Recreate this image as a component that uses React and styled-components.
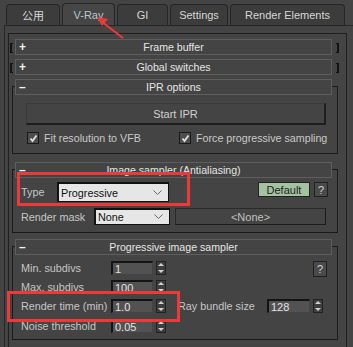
import React from "react";
import styled, { createGlobalStyle } from "styled-components";

const Global = createGlobalStyle`
  * { box-sizing: border-box; }
  body {
    margin: 0;
    background: #444444;
    font-family: "Liberation Sans", Arial, "Noto Sans CJK SC", sans-serif;
  }
`;

const tabs = ["公用", "V-Ray", "GI", "Settings", "Render Elements"];
const tabWidths = [54, 53, 51, 58, 115];

export default function App() {
  return (
    <Screen>
      <Global />
      <TabStrip>
        {tabs.map((t, i) => (
          <Tab key={t} $w={tabWidths[i]} $active={i === 1}>
            {t}
          </Tab>
        ))}
      </TabStrip>
      <TabPage>
        <Panel>
          <Collapsed>
            <Bracket />
            <Header>
              <Sign>+</Sign>Frame buffer
            </Header>
            <Bracket $right />
          </Collapsed>
          <Collapsed $top={4}>
            <Bracket />
            <Header>
              <Sign>+</Sign>Global switches
            </Header>
            <Bracket $right />
          </Collapsed>

          <Frame $top={11} $bottom={8}>
            <Header>
              <Sign>–</Sign>IPR options
            </Header>
            <BigButton>Start IPR</BigButton>
            <CheckRow>
              <Check>
                <Box>
                  <Tick />
                </Box>
                Fit resolution to VFB
              </Check>
              <Check>
                <Box>
                  <Tick />
                </Box>
                Force progressive sampling
              </Check>
            </CheckRow>
          </Frame>

          <Frame $top={15} $bottom={7}>
            <Header>
              <Sign>–</Sign>Image sampler (Antialiasing)
            </Header>
            <Row $h={20} $top={4}>
              <Label $w={36}>Type</Label>
              <Select $w={112} $h={20}>
                Progressive
                <Chevron />
              </Select>
              <DefaultBtn>Default</DefaultBtn>
              <Help>?</Help>
            </Row>
            <Row $h={17} $top={6}>
              <Label $w={73}>Render mask</Label>
              <Select $w={76} $h={17}>
                None
                <Chevron />
              </Select>
              <NoneBtn>&lt;None&gt;</NoneBtn>
            </Row>
          </Frame>

          <Frame $top={13} $bottom={6}>
            <Header>
              <Sign>–</Sign>Progressive image sampler
            </Header>
            <Row $h={14} $top={6}>
              <Label $w={90}>Min. subdivs</Label>
              <Spinner value="1" />
              <Help $tall>?</Help>
            </Row>
            <Row $h={14} $top={5}>
              <Label $w={90}>Max. subdivs</Label>
              <Spinner value="100" />
            </Row>
            <Row $h={14} $top={5}>
              <Label $w={90}>Render time (min)</Label>
              <Spinner value="1.0" />
              <Label $w={89} $left={12}>
                Ray bundle size
              </Label>
              <Spinner value="128" w={43} />
            </Row>
            <Row $h={14} $top={6}>
              <Label $w={90}>Noise threshold</Label>
              <Spinner value="0.05" />
            </Row>
          </Frame>
        </Panel>
      </TabPage>

      <Callout style={{ left: 17, top: 172, width: 173, height: 34 }} />
      <Callout style={{ left: 7, top: 291, width: 173, height: 31 }} />
      <Arrow width="40" height="30" viewBox="0 0 40 30">
        <line x1="32" y1="24" x2="11" y2="8" stroke="#ec3a3a" strokeWidth="2.2" />
        <polygon points="6,3 17,5 11,12" fill="#ec3a3a" />
      </Arrow>
    </Screen>
  );
}

function Spinner({ value, w = 42 }) {
  return (
    <>
      <Field $w={w}>{value}</Field>
      <Arrows>
        <svg width="8" height="12" viewBox="0 0 8 12">
          <polygon points="1,4 7,4 4,1" fill="#d0d0d0" />
          <polygon points="1,8 7,8 4,11" fill="#d0d0d0" />
        </svg>
      </Arrows>
    </>
  );
}

function Chevron() {
  return (
    <ChevronSvg width="9" height="6" viewBox="0 0 9 6">
      <polyline points="0.5,0.5 4.5,4.5 8.5,0.5" fill="none" stroke="#666" strokeWidth="1" />
    </ChevronSvg>
  );
}

function Tick() {
  return (
    <svg width="9" height="9" viewBox="0 0 9 9">
      <polyline points="1.5,4.5 3.5,7 7.5,1.5" fill="none" stroke="#e0e0e0" strokeWidth="1.8" />
    </svg>
  );
}

const Screen = styled.div`
  position: relative;
  width: 353px;
  height: 347px;
  overflow: hidden;
  background: #444444;
  font-size: 11px;
  color: #c9c9c9;
`;

const TabStrip = styled.div`
  display: flex;
  gap: 2px;
  height: 25px;
  padding: 4px 0 0 6px;
`;

const Tab = styled.div`
  width: ${(p) => p.$w}px;
  height: ${(p) => (p.$active ? 22 : 21)}px;
  margin-top: ${(p) => (p.$active ? -1 : 0)}px;
  border: 1px solid #262626;
  border-bottom: none;
  border-radius: 4px 4px 0 0;
  background: ${(p) => (p.$active ? "#464646" : "#3c3c3c")};
  color: ${(p) => (p.$active ? "#b8c4d0" : "#d6d6d6")};
  font-size: 11px;
  display: flex;
  align-items: center;
  justify-content: center;
  position: relative;
  z-index: 1;
`;

const TabPage = styled.div`
  margin-left: 4px;
  height: 322px;
  border-top: 1px solid #262626;
  border-left: 1px solid #262626;
  padding: 7px 0 0 3px;
`;

const Panel = styled.div`
  width: 339px;
  height: 320px;
  border: 1px solid #202020;
  border-bottom: none;
  padding: 5px 0 0 0;
  display: flex;
  flex-direction: column;
`;

const Collapsed = styled.div`
  display: flex;
  align-items: center;
  gap: 2px;
  padding-left: 1px;
  margin-top: ${(p) => p.$top || 0}px;
  & > div:nth-child(2) {
    margin-right: 2px;
  }
`;

const Bracket = styled.div`
  width: 3px;
  height: 10px;
  border: 1px solid #141414;
  border-${(p) => (p.$right ? "left" : "right")}: none;
  border-${(p) => (p.$right ? "right" : "left")}-width: 2px;
  margin-top: 2px;
`;

const Header = styled.div`
  position: relative;
  width: 317px;
  height: 16px;
  flex-shrink: 0;
  border: 1px solid #5e5e5e;
  background: #444444;
  color: #e4e4e4;
  font-size: 10.6px;
  display: flex;
  align-items: center;
  justify-content: center;
`;

const Sign = styled.span`
  position: absolute;
  left: 3px;
  top: 0;
  font-weight: bold;
  font-size: 12px;
  color: #f0f0f0;
`;

const Frame = styled.div`
  margin-top: ${(p) => p.$top}px;
  margin-left: 3px;
  width: 326px;
  border: 1px solid #1a1a1a;
  padding-bottom: ${(p) => p.$bottom}px;
  & > ${Header} {
    margin: -8px 0 0 2px;
  }
`;

const BigButton = styled.div`
  margin: 8px 0 0 13px;
  width: 300px;
  height: 22px;
  border: 1px solid #2a2a2a;
  border-top-color: #3a3a3a;
  border-left-color: #3a3a3a;
  border-bottom: 2px solid #1e1e1e;
  border-right: 2px solid #1e1e1e;
  display: flex;
  align-items: center;
  justify-content: center;
  color: #d0d0d0;
  font-size: 11px;
`;

const CheckRow = styled.div`
  display: flex;
  margin: 6px 0 0 14px;
  height: 14px;
  align-items: center;
`;

const Check = styled.div`
  display: flex;
  align-items: center;
  gap: 5px;
  width: 152px;
  white-space: nowrap;
  color: #c9c9c9;
  font-size: 10.7px;
`;

const Box = styled.div`
  width: 12px;
  height: 12px;
  border: 1px solid #1a1a1a;
  background: #4e4e4e;
  display: flex;
  align-items: center;
  justify-content: center;
`;

const Row = styled.div`
  display: flex;
  align-items: center;
  height: ${(p) => p.$h}px;
  margin-top: ${(p) => p.$top || 0}px;
  padding: 0 9px 0 8px;
`;

const Label = styled.div`
  width: ${(p) => p.$w}px;
  margin-left: ${(p) => p.$left || 0}px;
  white-space: nowrap;
  color: #c6c6c6;
  font-size: 10.8px;
`;

const Select = styled.div`
  position: relative;
  width: ${(p) => p.$w}px;
  height: ${(p) => p.$h}px;
  background: #e6e6e6;
  border: 1px solid #111;
  border-top-width: 2px;
  border-left-width: 2px;
  color: #111;
  font-size: 10.8px;
  display: flex;
  align-items: center;
  padding-left: 2px;
`;

const ChevronSvg = styled.svg`
  position: absolute;
  right: 6px;
  top: 50%;
  margin-top: -3px;
`;

const DefaultBtn = styled.div`
  margin-left: auto;
  width: 52px;
  height: 15px;
  align-self: flex-start;
  background: #a3c3a0;
  border: 1px solid #222;
  color: #1e1e1e;
  font-size: 11px;
  display: flex;
  align-items: center;
  justify-content: center;
`;

const Help = styled.div`
  margin-left: ${(p) => (p.$tall ? "auto" : "4px")};
  margin-right: ${(p) => (p.$tall ? 1 : 0)}px;
  width: 14px;
  height: ${(p) => (p.$tall ? 16 : 15)}px;
  align-self: flex-start;
  background: #4a4a4a;
  border: 1px solid #202020;
  color: #d0d0d0;
  font-size: 11px;
  display: flex;
  align-items: center;
  justify-content: center;
`;

const NoneBtn = styled.div`
  margin-left: 5px;
  width: 151px;
  height: 17px;
  border: 1px solid #2a2a2a;
  border-right-color: #1c1c1c;
  border-bottom-color: #1c1c1c;
  color: #c0c0c0;
  font-size: 11px;
  display: flex;
  align-items: center;
  justify-content: center;
`;

const Field = styled.div`
  width: ${(p) => p.$w}px;
  height: 14px;
  background: #525252;
  border: 1px solid #444;
  border-top: 2px solid #141414;
  border-left: 2px solid #141414;
  color: #e2e2e2;
  font-size: 11px;
  display: flex;
  align-items: center;
  padding-left: 2px;
`;

const Arrows = styled.div`
  margin-left: 3px;
  width: 10px;
  height: 14px;
  background: #3e3e3e;
  border: 1px solid #222;
  display: flex;
  align-items: center;
  justify-content: center;
`;

const Callout = styled.div`
  position: absolute;
  border: 3px solid #ec3a3a;
  pointer-events: none;
`;

const Arrow = styled.svg`
  position: absolute;
  left: 91px;
  top: 14px;
  z-index: 3;
`;
